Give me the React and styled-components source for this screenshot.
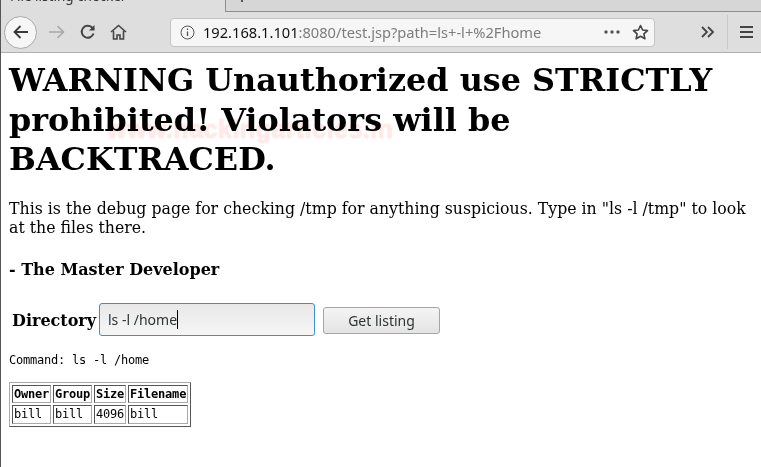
import styled, { createGlobalStyle } from "styled-components";

const GlobalStyle = createGlobalStyle`
  html, body {
    margin: 0;
    padding: 0;
    background: #fff;
    overflow: hidden;
  }
`;

const Window = styled.div`
  width: 761px;
  height: 467px;
  position: relative;
  overflow: hidden;
  border-left: 1px solid #555;
  box-sizing: border-box;
`;

const TabStrip = styled.div`
  height: 11px;
  background: #d6d6d6;
  border-bottom: 1px solid #8e8e8e;
  display: flex;
`;

const ActiveTab = styled.div`
  width: 225px;
  height: 12px;
  background: #dedede;
  border-right: 1px solid #8e8e8e;
  overflow: hidden;
  font: 13.5px "Noto Sans", sans-serif;
  color: #333;
  line-height: 16px;
  padding-left: 9px;
  box-sizing: border-box;
  flex: none;
  span { display: block; margin-top: -12px; white-space: nowrap; }
`;

const NewTabMark = styled.div`
  width: 2px;
  height: 2px;
  background: #555;
  margin-left: 15px;
  flex: none;
`;

const Toolbar = styled.div`
  height: 40px;
  background: #dedede;
  border-bottom: 1px solid #b0b0b0;
  display: flex;
  align-items: center;
  padding: 0 8px 0 3px;
`;

const BackButton = styled.div`
  width: 33px;
  height: 33px;
  border-radius: 50%;
  background: #f6f6f6;
  border: 1px solid #a8a8a8;
  display: flex;
  align-items: center;
  justify-content: center;
  box-sizing: border-box;
  margin-right: 4px;
  flex: none;
`;

const ToolIcon = styled.div`
  width: 31px;
  height: 24px;
  display: flex;
  align-items: center;
  justify-content: center;
  flex: none;
`;

const OverflowIcon = styled(ToolIcon)`
  width: 30px;
  margin-left: 38px;
`;

const UrlBar = styled.div`
  margin-left: 36px;
  width: 485px;
  height: 29px;
  background: #f6f6f6;
  border: 1px solid #c4c4c4;
  border-radius: 4px;
  box-sizing: border-box;
  display: flex;
  align-items: center;
  padding: 0 5px 0 9px;
  font: 14.65px "Noto Sans", sans-serif;
  flex: none;
`;

const UrlText = styled.div`
  flex: 1;
  margin-left: 8px;
  color: #7d7d7d;
  white-space: nowrap;
  b { font-weight: 400; color: #111; }
`;

const PageActions = styled.div`
  display: flex;
  align-items: center;
  gap: 11px;
`;

const Divider = styled.div`
  width: 1px;
  height: 34px;
  background: #c8c8c8;
  margin: 0 12px 0 4px;
  flex: none;
`;

const Page = styled.main`
  padding: 0 8px;
  font-family: "DejaVu Serif", serif;
  color: #000;
  position: relative;
`;

const Title = styled.h1`
  font-size: 31.85px;
  line-height: 39.5px;
  font-weight: 700;
  margin: 0;
  padding-top: 8px;
`;

const Watermark = styled.div`
  position: absolute;
  left: 106px;
  top: 62px;
  font: 700 25px "Liberation Sans", sans-serif;
  color: #ffeaea;
  text-shadow: 0 0 2px #ffd8d8;
  mix-blend-mode: multiply;
  letter-spacing: 0.5px;
  pointer-events: none;
`;

const Intro = styled.p`
  font-size: 15.75px;
  line-height: 19px;
  margin: 19px 0 0;
`;

const Signature = styled.h4`
  font-size: 16px;
  line-height: 19px;
  font-weight: 700;
  margin: 23px 0 0;
`;

const Form = styled.form`
  display: flex;
  align-items: center;
  margin: 24px 0 0 3px;
`;

const Label = styled.label`
  font-size: 16px;
  font-weight: 700;
  width: 87px;
  padding-top: 2px;
  flex: none;
`;

const TextField = styled.div`
  width: 216px;
  height: 33px;
  box-sizing: border-box;
  border: 1px solid #3d8fd0;
  border-radius: 3px;
  background: linear-gradient(#e8e8e8, #f6f6f6);
  font: 14px "Noto Sans", sans-serif;
  color: #2e3436;
  padding-left: 8px;
  display: flex;
  align-items: center;
`;

const Caret = styled.span`
  width: 1px;
  height: 19px;
  background: #000;
`;

const Submit = styled.button`
  width: 117px;
  height: 27px;
  margin: 2px 0 0 8px;
  border: 1px solid #a5a5a5;
  border-radius: 3px;
  background: linear-gradient(#f4f4f4, #e4e4e4);
  font: 14px "Noto Sans", sans-serif;
  color: #2e3436;
  padding: 0;
`;

const Command = styled.pre`
  font: 12px/14px "DejaVu Sans Mono", monospace;
  letter-spacing: -0.22px;
  margin: 17px 0 0 0;
`;

const Listing = styled.table`
  margin: 15px 0 0 0;
  border: 1px solid;
  border-color: #aaa #555 #555 #aaa;
  border-spacing: 2px;
  font: 12px/14px "DejaVu Sans Mono", monospace;
  letter-spacing: -0.22px;
  th, td {
    padding: 1px;
    border: 1px solid;
    border-color: #555 #aaa #aaa #555;
    text-align: left;
  }
  td {
    line-height: 15px;
  }
`;

const rows = [{ owner: "bill", group: "bill", size: 4096, name: "bill" }];

const App = () => (
  <Window>
    <GlobalStyle />
    <TabStrip>
      <ActiveTab><span>File listing checker</span></ActiveTab>
      <NewTabMark />
    </TabStrip>
    <Toolbar>
      <BackButton>
        <svg width="18" height="18" viewBox="0 0 18 18" fill="none" stroke="#3a3a3a" strokeWidth="1.8">
          <path d="M16 9H2.5M8.500 3 2.500 9l6 6" />
        </svg>
      </BackButton>
      <ToolIcon>
        <svg width="18" height="18" viewBox="0 0 18 18" fill="none" stroke="#a8a8a8" strokeWidth="1.6">
          <path d="M1 9h14M9.500 3l6 6-6 6" />
        </svg>
      </ToolIcon>
      <ToolIcon>
        <svg width="16" height="16" viewBox="0 0 16 16" fill="none" stroke="#444" strokeWidth="2">
          <path d="M13.500 9.500A6 6 0 1 1 12 3.500L14 5.500" />
          <path d="M14.500 1v5.500H9" fill="#444" stroke="none" />
        </svg>
      </ToolIcon>
      <ToolIcon>
        <svg width="17" height="16" viewBox="0 0 17 16" fill="none" stroke="#444" strokeWidth="1.6">
          <path d="M1 8 8.500 1.500 16 8" />
          <path d="M3.500 7v8h3.500v-4h3v4h3.500V7" />
        </svg>
      </ToolIcon>
      <UrlBar>
        <svg width="15" height="15" viewBox="0 0 15 15" fill="none" stroke="#555" strokeWidth="1">
          <circle cx="7.500" cy="7.500" r="6.500" />
          <path d="M7.500 6.500v4.500M7.500 3.500v1.500" strokeWidth="1.300" />
        </svg>
        <UrlText><b>192.168.1.101</b>:8080/test.jsp?path=ls+-l+%2Fhome</UrlText>
        <PageActions>
          <svg width="18" height="6" viewBox="0 0 18 6" fill="#555">
            <circle cx="3" cy="3" r="1.700" /><circle cx="9" cy="3" r="1.700" /><circle cx="15" cy="3" r="1.700" />
          </svg>
          <svg width="17" height="17" viewBox="0 0 17 17" fill="none" stroke="#444" strokeWidth="1.600" strokeLinejoin="round">
            <path d="M8.500 1.500l2.100 4.500 4.900.6-3.600 3.300 1 4.900-4.400-2.500-4.400 2.500 1-4.900L1.500 6.600l4.900-.6z" />
          </svg>
        </PageActions>
      </UrlBar>
      <OverflowIcon>
        <svg width="14" height="12" viewBox="0 0 14 12" fill="none" stroke="#444" strokeWidth="1.800">
          <path d="M1 1l5 5-5 5M7 1l5 5-5 5" />
        </svg>
      </OverflowIcon>
      <Divider />
      <svg width="13" height="12" viewBox="0 0 13 12" fill="#444">
        <rect y="0" width="13" height="2" /><rect y="5" width="13" height="2" /><rect y="10" width="13" height="2" />
      </svg>
    </Toolbar>
    <Page>
      <Title>WARNING Unauthorized use STRICTLY prohibited! Violators will be BACKTRACED.</Title>
      <Watermark>www.hackingarticles.in</Watermark>
      <Intro>This is the debug page for checking /tmp for anything suspicious. Type in "ls -l /tmp" to look at the files there.</Intro>
      <Signature>- The Master Developer</Signature>
      <Form onSubmit={(e) => e.preventDefault()}>
        <Label>Directory</Label>
        <TextField>ls -l /home<Caret /></TextField>
        <Submit type="button">Get listing</Submit>
      </Form>
      <Command>Command: ls -l /home</Command>
      <Listing>
        <thead>
          <tr><th>Owner</th><th>Group</th><th>Size</th><th>Filename</th></tr>
        </thead>
        <tbody>
          {rows.map((r) => (
            <tr key={r.name}><td>{r.owner}</td><td>{r.group}</td><td>{r.size}</td><td>{r.name}</td></tr>
          ))}
        </tbody>
      </Listing>
    </Page>
  </Window>
);

export default App;
